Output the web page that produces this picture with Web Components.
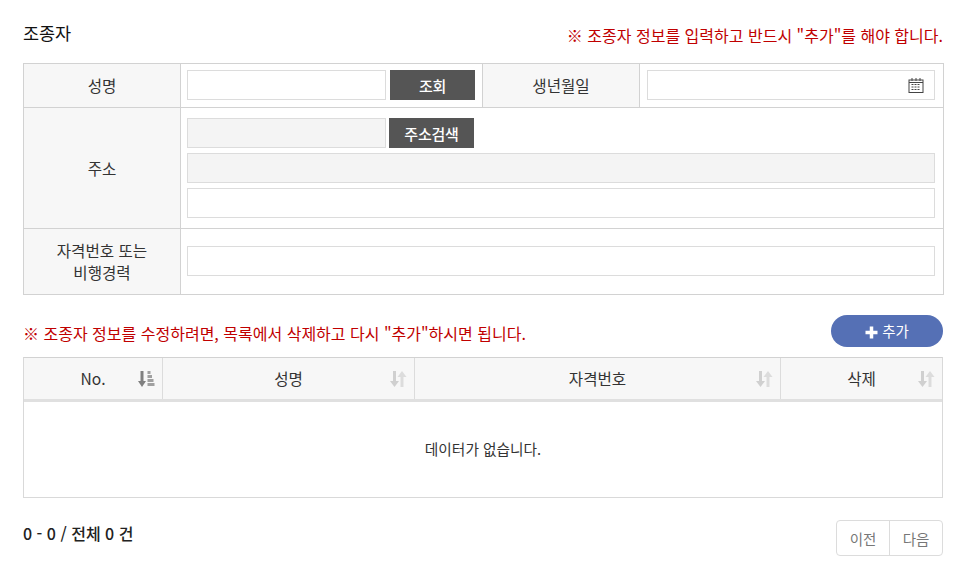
<!DOCTYPE html>
<html lang="ko">
<head>
<meta charset="utf-8">
<title>조종자</title>
<style>
    html, body { margin: 0; background: #fff; }
    body { font-family: "Noto Sans CJK KR", "Noto Sans", sans-serif; color: #333; }
</style>
</head>
<body>
<pilot-page></pilot-page>

<script>
const sortPaths = {
    idle: `<path d="M4.500 0v13" stroke="#d0d0d0" stroke-width="3"/><path d="M0 10h9L4.500 16z" fill="#d0d0d0"/><path d="M12 16V3" stroke="#dcdcdc" stroke-width="3"/><path d="M7.500 6h9L12 0z" fill="#dcdcdc"/>`,
    asc: `<path d="M4 0v13" stroke="#808080" stroke-width="3"/><path d="M0 10h8L4 16z" fill="#808080"/><path d="M9.500 0h3v3h-3zM9.500 4h4.500v3H9.500zM9.500 8h6v3h-6zM9.500 12h7v3h-7z" fill="#a0a0a0"/>`
}

class SortIcon extends HTMLElement {
    connectedCallback() {
        const kind = this.getAttribute('kind') || 'idle'
        this.attachShadow({mode: 'open'}).innerHTML = `
        <style>:host { display: block; width: 17px; height: 16px; line-height: 0; }</style>
        <svg width="17" height="16" viewBox="0 0 17 16">${sortPaths[kind]}</svg>`
    }
}

class TextBox extends HTMLElement {
    connectedCallback() {
        const shadow = this.attachShadow({mode: 'open'})
        shadow.innerHTML = `
        <style>
            :host { display: block; height: 30px; box-sizing: border-box; border: 1px solid #dcdcdc; background: #fff; position: relative; }
            :host([readonly]) { background: #f4f4f4; }
            svg { position: absolute; right: 10px; top: 7px; }
        </style>
        ${this.hasAttribute('calendar') ? `<svg width="16" height="15" viewBox="0 0 16 15">
            <rect x="1" y="2" width="14" height="12.500" fill="#fff" stroke="#444"/>
            <path d="M1 4.500h14" stroke="#444"/>
            <path d="M4 0v3M8 0v3M12 0v3" stroke="#444"/>
            <path d="M3.500 6.500h9M3.500 9h9M3.500 11.500h9" stroke="#444" stroke-dasharray="2 1"/>
        </svg>` : ''}`
    }
}

class DarkButton extends HTMLElement {
    connectedCallback() {
        this.attachShadow({mode: 'open'}).innerHTML = `
        <style>
            :host { display: flex; align-items: center; justify-content: center; box-sizing: border-box; height: 30px; width: 85px; background: #555; color: #fff; font-size: 15px; font-weight: 500; letter-spacing: -0.2px; }
        </style>
        <slot></slot>`
    }
}

class PilotPage extends HTMLElement {
    constructor() {
        super()
        this.attachShadow({mode: 'open'})
        this.shadowRoot.appendChild(pageTemplate.content.cloneNode(true))
    }
}

const pageTemplate = document.createElement('template')
pageTemplate.innerHTML = `
<style>
    :host { display: block; box-sizing: border-box; width: 966px; height: 575px; padding: 0 23px; font-size: 15.600px; overflow: hidden; }
    .head { display: flex; justify-content: space-between; align-items: center; height: 63px; }
    .title { font-size: 17.500px; font-weight: 400; color: #111; letter-spacing: -0.100px; position: relative; top: 1px; }
    .warn { color: #c00000; font-size: 16px; letter-spacing: 0; }
    .head .warn { position: relative; top: 3px; }

    .form { width: 921px; box-sizing: border-box; border: 1px solid #d2d2d2; border-bottom: 0; display: grid; grid-template-columns: 157px 1fr; }
    .form > * { border-bottom: 1px solid #d2d2d2; }
    .label { background: #f7f7f7; border-right: 1px solid #d2d2d2; display: flex; align-items: center; justify-content: center; text-align: center; line-height: 22px; padding-bottom: 1px; box-sizing: border-box; }
    .value { padding: 6px 8px 6px 6px; }
    .row1 { height: 44px; box-sizing: border-box; }
    .split { display: flex; padding: 0; }
    .split .name { display: flex; width: 301px; padding: 6px 0 6px 6px; gap: 4px; box-sizing: border-box; }
    .split .name text-box { width: 199px; }
    .split .label { width: 158px; flex: none; border-left: 1px solid #d2d2d2; }
    .split .birth { flex: 1; padding: 6px 8px 6px 7px; }
    .addr { display: flex; flex-direction: column; gap: 5px; padding: 10px 8px 10px 6px; height: 121px; box-sizing: border-box; }
    .addr .line { display: flex; gap: 3px; }
    .addr .line text-box { width: 199px; }
    .lic { height: 66px; box-sizing: border-box; display: flex; align-items: center; }
    .lic text-box { flex: 1; margin-bottom: 1px; }

    .bar { display: flex; justify-content: space-between; align-items: flex-end; height: 62px; box-sizing: border-box; width: 920px; padding-bottom: 10px; }
    .bar .warn { position: relative; top: -2px; }
    .add { display: flex; align-items: center; justify-content: center; gap: 4px; width: 112px; height: 32px; border-radius: 16px; background: #5570b5; color: #fff; font-size: 14.500px; padding-bottom: 1px; box-sizing: border-box; }
    .add svg { position: relative; top: 2px; }

    .list { width: 920px; box-sizing: border-box; border: 1px solid #d9d9d9; border-top-color: #d2d2d2; }
    .cols { display: grid; grid-template-columns: 139px 252px 366px 1fr; height: 41px; background: #f7f7f7; border-bottom: 3px solid #e0e0e0; box-sizing: content-box; }
    .cols div { display: flex; align-items: center; justify-content: center; position: relative; border-right: 1px solid #dcdcdc; padding-bottom: 2px; box-sizing: border-box; color: #333; }
    .cols div:last-child { border-right: 0; }
    .cols sort-icon { position: absolute; right: 7px; top: 13px; }
    .empty { height: 95px; display: flex; align-items: center; justify-content: center; padding-bottom: 3px; box-sizing: border-box; font-size: 14.700px; color: #333; }

    .foot { width: 920px; display: flex; justify-content: space-between; align-items: flex-start; padding-top: 22px; }
    .count { font-size: 16px; font-weight: 500; color: #222; position: relative; top: 1px; }
    .pager { display: flex; height: 36px; box-sizing: border-box; border: 1px solid #dcdcdc; border-radius: 4px; color: #777; font-size: 14.500px; }
    .pager span { width: 52px; display: flex; align-items: center; justify-content: center; box-sizing: border-box; }
    .pager span + span { width: 53px; border-left: 1px solid #dcdcdc; }
</style>

<div class="head">
    <div class="title">조종자</div>
    <div class="warn">※ 조종자 정보를 입력하고 반드시 "추가"를 해야 합니다.</div>
</div>

<div class="form">
    <div class="label row1">성명</div>
    <div class="split row1">
        <div class="name">
            <text-box></text-box>
            <dark-button>조회</dark-button>
        </div>
        <div class="label">생년월일</div>
        <div class="birth"><text-box calendar></text-box></div>
    </div>
    <div class="label">주소</div>
    <div class="addr">
        <div class="line">
            <text-box readonly></text-box>
            <dark-button>주소검색</dark-button>
        </div>
        <text-box readonly></text-box>
        <text-box></text-box>
    </div>
    <div class="label">자격번호 또는<br>비행경력</div>
    <div class="value lic"><text-box></text-box></div>
</div>

<div class="bar">
    <div class="warn">※ 조종자 정보를 수정하려면, 목록에서 삭제하고 다시 "추가"하시면 됩니다.</div>
    <div class="add">
        <svg width="13" height="13" viewBox="0 0 13 13"><path d="M6.500 .5v12M.5 6.500h12" stroke="#fff" stroke-width="3.500"/></svg>
        <span>추가</span>
    </div>
</div>

<div class="list">
    <div class="cols">
        <div>No.<sort-icon kind="asc"></sort-icon></div>
        <div>성명<sort-icon></sort-icon></div>
        <div>자격번호<sort-icon></sort-icon></div>
        <div>삭제<sort-icon></sort-icon></div>
    </div>
    <div class="empty">데이터가 없습니다.</div>
</div>

<div class="foot">
    <div class="count">0 - 0 / 전체 0 건</div>
    <div class="pager"><span>이전</span><span>다음</span></div>
</div>
`

customElements.define('sort-icon', SortIcon)
customElements.define('text-box', TextBox)
customElements.define('dark-button', DarkButton)
customElements.define('pilot-page', PilotPage)
</script>
</body>
</html>
